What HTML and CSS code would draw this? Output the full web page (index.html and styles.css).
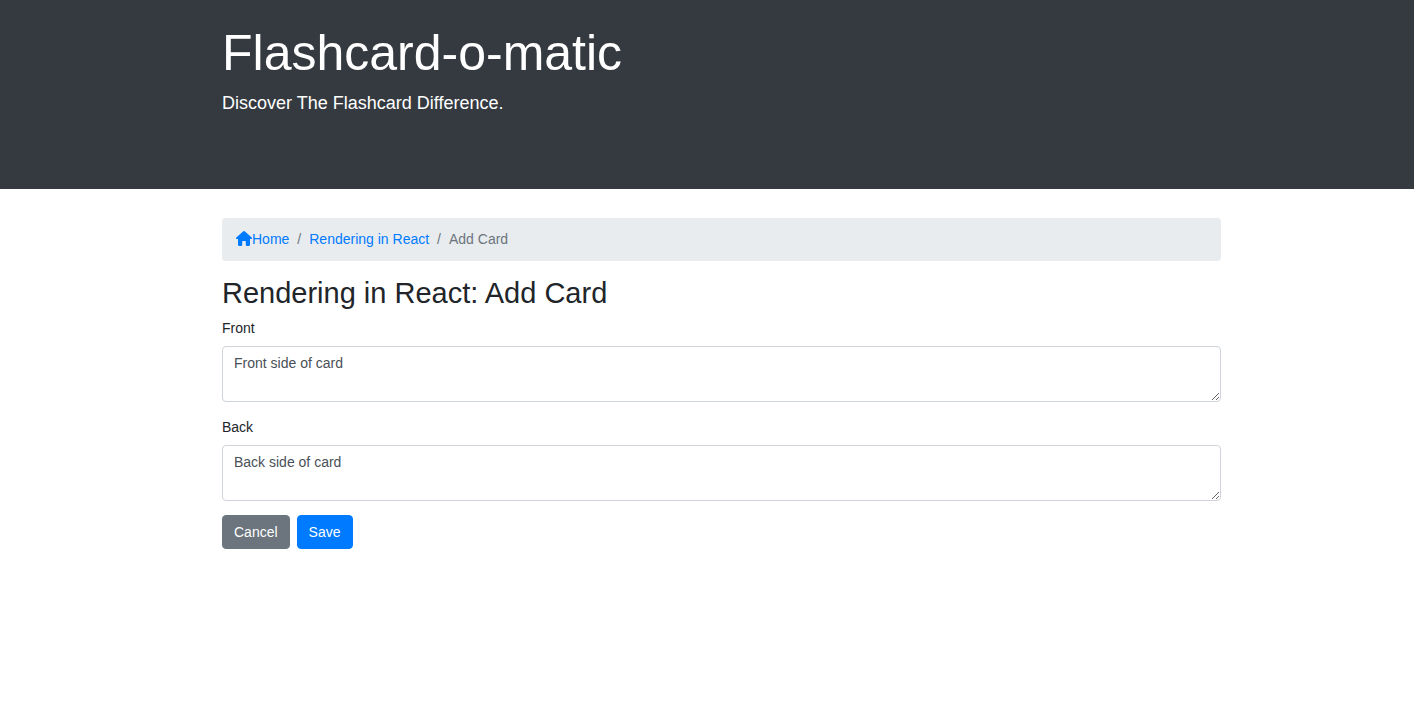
FILE: index.html
```html
<!DOCTYPE html>
<html lang="en">
<head>
<meta charset="utf-8">
<meta name="viewport" content="width=device-width, initial-scale=1">
<title>Flashcard-o-matic</title>
<link rel="stylesheet" href="styles.css">
</head>
<body>
<header class="jumbotron">
  <div class="container">
    <h1 class="site-title">Flashcard-o-matic</h1>
    <p class="lead">Discover The Flashcard Difference.</p>
  </div>
</header>
<main class="container">
  <nav aria-label="breadcrumb">
    <ol class="breadcrumb">
      <li><a href="#"><svg class="home-icon" viewBox="0 0 16 15" aria-hidden="true"><path fill="currentColor" d="M7.300 .3Q8 -.3 8.700 .3L15.700 6.500Q16.300 7.200 15.800 7.800Q15.500 8 15 8H14V13.500Q14 15 12.600 15H10.800Q9.800 15 9.800 14V10.600Q9.800 10 9.200 10H6.800Q6.200 10 6.200 10.600V14Q6.200 15 5.200 15H3.400Q2 15 2 13.500V8H1Q.5 8 .2 7.800Q-.3 7.200 .3 6.500Z"/></svg>Home</a></li>
      <li><a href="#">Rendering in React</a></li>
      <li aria-current="page">Add Card</li>
    </ol>
  </nav>
  <h2 class="page-title">Rendering in React: Add Card</h2>
  <form>
    <div class="form-group">
      <label for="front">Front</label>
      <textarea class="form-control" id="front" rows="2" placeholder="Front side of card"></textarea>
    </div>
    <div class="form-group">
      <label for="back">Back</label>
      <textarea class="form-control" id="back" rows="2" placeholder="Back side of card"></textarea>
    </div>
    <div class="actions">
      <button type="button" class="btn btn-secondary">Cancel</button>
      <button type="submit" class="btn btn-primary">Save</button>
    </div>
  </form>
</main>
</body>
</html>
```
FILE: styles.css
```css
*, *::before, *::after { box-sizing: border-box; }
body {
  margin: 0;
  background: #fff;
  color: #212529;
  font: 14px/22px "Liberation Sans", Arial, sans-serif;
}
.container {
  width: 100%;
  max-width: 1056px;
  margin: 0 auto;
  padding: 0 14px 0 43px;
}
.jumbotron {
  background: #343a40;
  color: #fff;
  padding: 23px 0 58px;
  margin-bottom: 29px;
}
.site-title {
  margin: 0 0 6px;
  font-size: 50px;
  line-height: 61px;
  font-weight: 400;
}
.lead { margin: 0 0 14px; font-size: 18px; line-height: 27px; }
.breadcrumb {
  display: flex;
  flex-wrap: wrap;
  list-style: none;
  margin: 0 0 15px;
  padding: 10px 14px 11px;
  background: #e9ecef;
  border-radius: 4px;
  color: #6c757d;
}
.breadcrumb li + li::before { content: "/"; padding: 0 8px; }
.breadcrumb a { color: #007bff; text-decoration: none; }
.home-icon { width: 16px; height: 15px; vertical-align: -2px; }
.page-title { margin: 0 0 7px; font-size: 29px; line-height: 34px; font-weight: 400; }
.form-group { margin-bottom: 14px; }
.form-group label { display: block; margin-bottom: 7px; }
.form-control {
  display: block;
  width: 100%;
  height: 56px;
  padding: 5px 11px;
  border: 1px solid #ced4da;
  border-radius: 4px;
  background: #fff;
  color: #495057;
  font: inherit;
  resize: vertical;
}
.form-control::placeholder { color: #495057; opacity: 1; }
.actions { display: flex; gap: 7px; }
.btn {
  padding: 5px 11px;
  border: 1px solid;
  border-radius: 4px;
  color: #fff;
  font: inherit;
  cursor: pointer;
}
.btn-secondary { background: #6c757d; border-color: #6c757d; }
.btn-primary { background: #007bff; border-color: #007bff; }
```
